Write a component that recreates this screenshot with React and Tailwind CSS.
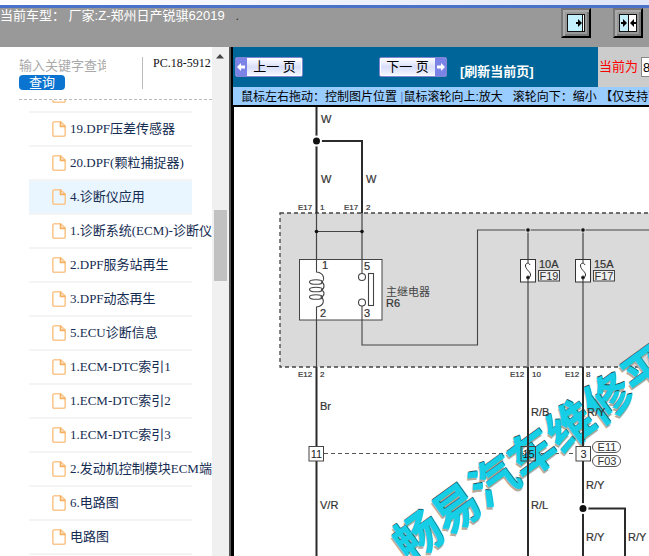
import React from 'react';
import clsx from 'clsx';

const menuItems = [
  { id: 'prev', label: '' },
  { id: 'dpf-19', label: '19.DPF压差传感器' },
  { id: 'dpf-20', label: '20.DPF(颗粒捕捉器)' },
  { id: 'tester', label: '4.诊断仪应用', active: true },
  { id: 'ecm', label: '1.诊断系统(ECM)-诊断仪' },
  { id: 'regen', label: '2.DPF服务站再生' },
  { id: 'dynamic', label: '3.DPF动态再生' },
  { id: 'ecu', label: '5.ECU诊断信息' },
  { id: 'dtc-1', label: '1.ECM-DTC索引1' },
  { id: 'dtc-2', label: '1.ECM-DTC索引2' },
  { id: 'dtc-3', label: '1.ECM-DTC索引3' },
  { id: 'pins', label: '2.发动机控制模块ECM端' },
  { id: 'circuit-6', label: '6.电路图' },
  { id: 'circuit', label: '电路图' },
];

function FileIcon() {
  return (
    <svg width="14" height="16" viewBox="0 0 14 16" fill="none" stroke="#fbc88f" strokeWidth="1.6" className="shrink-0">
      <path d="M8.5 .8H2.6Q.8 .8 .8 2.6V13.4Q.8 15.2 2.6 15.2H11.4Q13.2 15.2 13.2 13.4V5.2Z" />
      <path d="M8.5 .8V5.4H13.2" stroke="#f9ae5c" />
    </svg>
  );
}

function PanelButton({ label, children }) {
  return (
    <button
      type="button"
      aria-label={label}
      className="flex h-[30px] w-[30px] items-center justify-center border-2 border-t-[#777] border-l-[#777] border-r-black border-b-black bg-[#999] shadow-[inset_2px_2px_0_#aaa,inset_-2px_-2px_0_#777]"
    >
      <svg width="18" height="18" viewBox="0 0 18 18">{children}</svg>
    </button>
  );
}

function Header() {
  return (
    <header className="flex h-[39px] shrink-0 justify-between bg-[#999] pr-[6px]">
      <h1 className="text-[13px] leading-4 whitespace-pre text-white">
        当前车型： 厂家:Z-郑州日产锐骐62019{'   '}
        <span className="text-[#333]">.</span>
      </h1>
      <div className="flex gap-[22px]">
        <PanelButton label="展开">
          <rect width="18" height="18" fill="#111" />
          <rect x="1" y="1" width="14" height="16" fill="#c4effc" />
          <rect x="16" y="1" width="1" height="16" fill="#fff" />
          <path d="M9 8h2V5l4 4-4 4v-3H9z" fill="#000" />
        </PanelButton>
        <PanelButton label="收起">
          <rect width="18" height="18" fill="#111" />
          <rect x="1" y="1" width="8" height="16" fill="#c4effc" />
          <rect x="10" y="1" width="7" height="16" fill="#fff" />
          <path d="M2 8h2V5l4 4-4 4v-3H2zM17 8h-2V5l-4 4 4 4v-3h2z" fill="#000" />
        </PanelButton>
      </div>
    </header>
  );
}

function Sidebar() {
  return (
    <aside className="flex w-[229px] shrink-0 bg-white font-['Liberation_Serif','Noto_Sans_CJK_SC',serif]">
      <div className="flex min-w-0 flex-1 flex-col overflow-hidden">
        <form className="ml-[19px] flex h-[53px] shrink-0 border-b border-dashed border-[#bbb] pt-[10px]">
          <div className="flex h-8 w-[124px] shrink-0 flex-col items-start border-r border-[#bbb]">
            <input
              type="text"
              aria-label="关键字"
              placeholder="输入关键字查询"
              className="h-[18px] w-[87px] font-['Liberation_Sans','Noto_Sans_CJK_SC',sans-serif] text-[13px] outline-none placeholder:text-[#a9a9a9]"
            />
            <button type="button" className="h-[15px] w-[46px] rounded bg-[#0a74d0] text-[13px] leading-[15px] text-white">
              查询
            </button>
          </div>
          <span className="pl-[10px] text-[12px] leading-3 whitespace-nowrap text-[#111]">PC.18-5912</span>
        </form>
        <nav className="min-h-0 flex-1 overflow-hidden">
          <ul className="-mt-[21px] ml-[29px] w-[163px]">
            {menuItems.map((item) => (
              <li key={item.id} className={clsx('h-[34px] border-b-2 border-[#f4f4f4]', item.active && 'bg-[#eaf6ff]')}>
                <a href="#" className="flex h-8 items-center gap-1 pl-[23px] text-[13px] whitespace-nowrap text-[#152c52]" aria-label={item.label || '上一项'}>
                  <FileIcon />
                  {item.label}
                </a>
              </li>
            ))}
          </ul>
        </nav>
      </div>
      <div className="flex w-[17px] shrink-0 flex-col items-center bg-[#f0f0f0] pr-px pt-[7px]">
        <svg width="8" height="5" viewBox="0 0 8 5" fill="#444">
          <path d="M4 0l4 4.5H0z" />
        </svg>
        <div className="mt-[151px] h-[71px] w-[13px] bg-[#c1c1c1]" />
      </div>
    </aside>
  );
}

function PageButton({ children, arrow }) {
  return (
    <button
      type="button"
      className={clsx(
        'flex h-5 w-[68px] items-center overflow-hidden rounded-[2px] border border-[#7f86cf] bg-linear-to-b from-white via-[#d9def9] to-[#f6f7ff] text-[13px] text-black shadow-[inset_0_0_0_1px_#fff]',
        arrow === 'left' ? 'flex-row' : 'flex-row-reverse'
      )}
    >
      <svg width="11" height="18" viewBox="0 0 11 18" className={clsx('shrink-0', arrow === 'right' && 'rotate-180')}>
        <rect width="11" height="18" fill="#7b83e6" />
        <path d="M1 9l4-4v2.500h4v3H5V13z" fill="#fff" />
      </svg>
      <span className="flex-1 text-center leading-4 whitespace-nowrap">{children}</span>
    </button>
  );
}

function Toolbar() {
  return (
    <div className="flex h-10 shrink-0 overflow-hidden">
      <div className="flex w-[365px] shrink-0 items-start bg-[#069] pl-[2px] pt-[10px]">
        <PageButton arrow="left">上一 页</PageButton>
        <div className="w-[76px]" />
        <PageButton arrow="right">下一 页</PageButton>
        <a href="#" className="mt-[6px] ml-[13px] text-[13px] leading-[18px] font-bold whitespace-nowrap text-white">
          [刷新当前页]
        </a>
      </div>
      <div className="flex flex-1 items-center bg-[#ccc] pl-px">
        <label htmlFor="page" className="shrink-0 text-[13px] text-[#f00]">当前为</label>
        <input
          id="page"
          type="text"
          defaultValue="8"
          className="ml-[3px] h-5 w-10 shrink-0 border border-[#888] bg-white pl-px text-[13px] text-black"
        />
      </div>
    </div>
  );
}

const wireLabels = [
  { x: 321, y: 123, text: 'W' },
  { x: 321, y: 183, text: 'W' },
  { x: 366, y: 183, text: 'W' },
  { x: 320, y: 410, text: 'Br' },
  { x: 320, y: 509, text: 'V/R' },
  { x: 531, y: 416, text: 'R/B' },
  { x: 587, y: 416, text: 'R/Y' },
  { x: 531, y: 509, text: 'R/L' },
  { x: 586, y: 489, text: 'R/Y' },
  { x: 586, y: 541, text: 'R/Y' },
  { x: 628, y: 541, text: 'R/Y' },
  { x: 322, y: 269, text: '1' },
  { x: 364, y: 270, text: '5' },
  { x: 320, y: 317, text: '2' },
  { x: 364, y: 317, text: '3' },
  { x: 539, y: 268, text: '10A' },
  { x: 594, y: 268, text: '15A' },
  { x: 386, y: 307, text: 'R6' },
];

const pinLabels = [
  { x: 298, y: 210, text: 'E17' },
  { x: 320, y: 210, text: '1' },
  { x: 344, y: 210, text: 'E17' },
  { x: 366, y: 210, text: '2' },
  { x: 298, y: 377, text: 'E12' },
  { x: 320, y: 377, text: '2' },
  { x: 510, y: 377, text: 'E12' },
  { x: 532, y: 377, text: '10' },
  { x: 565, y: 377, text: 'E12' },
  { x: 586, y: 377, text: '8' },
];

const fuses = [
  { x: 528, name: 'F19' },
  { x: 583, name: 'F17' },
];

const connectors = [
  { x: 316, text: '11', fill: '#fff' },
  { x: 528, text: '15', fill: 'none' },
  { x: 583, text: '3', fill: '#fff' },
];

function Watermark() {
  const text = '畅易汽车维修平';
  return (
    <g transform="translate(419 537) rotate(-36)" fontSize="47" fontWeight="700">
      <text x="-26" y="18" fill="#b5aa9b">{text}</text>
      <text x="-23" y="15" fill="#17525c">{text}</text>
      <text x="-24" y="16" fill="#16cfe6" stroke="#16cfe6" strokeWidth="0.600">{text}</text>
    </g>
  );
}

function WiringDiagram() {
  return (
    <svg width="415" height="449" viewBox="234 107 415 449" className="block font-['Liberation_Sans','Noto_Sans_CJK_SC',sans-serif]">
      <rect x="280" y="213" width="400" height="154" fill="#dadada" stroke="#444" strokeWidth="1.3" strokeDasharray="4 3" />
      <path d="M324 453.5H576" stroke="#555" strokeDasharray="4 3" />
      <Watermark />

      {/* outer wires */}
      <g fill="none" stroke="#2b2b2b" strokeWidth="2">
        <path d="M316.5 107V213M316.5 367V556M316 141H362V213" />
        <path d="M528 367V556M583 367V556M583 508.500H625V556" />
      </g>

      {/* wires inside the fuse box */}
      <g fill="none" stroke="#444" strokeWidth="1.2">
        <path d="M316.5 213V260M362 213V274M316.5 231.500H362M316.500 320V367" />
        <path d="M528 230V367M583 230V367" />
      </g>
      <g fill="#111">
        <circle cx="316.5" cy="231.5" r="1.8" />
        <circle cx="362" cy="231.5" r="1.8" />
      </g>

      {/* relay */}
      <rect x="299.5" y="259.5" width="82.500" height="60.500" fill="#fff" stroke="#444" />
      <g fill="none" stroke="#444" strokeWidth="1.100">
        <path d="M316.5 259V272C325 273 325 281 321 282C325 283 325 289 321 290C325 291 325 296 321 297C325 300 324 306 316.5 307V320" />
        <ellipse cx="316" cy="282" rx="6.500" ry="2.300" />
        <ellipse cx="316" cy="289.500" rx="6.500" ry="2.300" />
        <ellipse cx="316" cy="297" rx="6.500" ry="2.300" />
        <path d="M362 259V274M362 306V345H477.500V230H649" />
        <circle cx="362" cy="277" r="3.500" fill="#fff" />
        <circle cx="362" cy="302.500" r="3.500" fill="#fff" />
        <rect x="368.500" y="273.500" width="5" height="32" />
      </g>

      {fuses.map((fuse) => (
        <g key={fuse.name}>
          <circle cx={fuse.x} cy="230" r="2.300" fill="#111" stroke="#ddd" />
          <rect x={fuse.x - 7.5} y="259.5" width="15" height="22.500" fill="#fff" stroke="#333" />
          <g transform={`translate(${fuse.x} 271)`} fill="none" stroke="#333">
            <path d="M0 -11V-8M2 -6C1 -9 -3 -8 -2.500 -5C-2 -1 3 1 2.500 4C2.300 6 1 7 0 7V11" />
            <circle cx="0" cy="6.500" r="1.500" fill="#111" />
          </g>
          <rect x={fuse.x + 10.5} y="270.5" width="21" height="10.500" fill="#eee" stroke="#444" />
          <text x={fuse.x + 21} y="280" fontSize="11" textAnchor="middle" fill="#333">{fuse.name}</text>
        </g>
      ))}

      {connectors.map((item) => (
        <g key={item.text}>
          <rect x={item.x - 7} y="446.500" width="14.500" height="14.500" fill={item.fill} stroke="#444" />
          <text x={item.x + 0.5} y="457.500" fontSize="11" textAnchor="middle" fill="#222">{item.text}</text>
        </g>
      ))}

      <g fill="#fff" stroke="#555">
        <rect x="592.500" y="441.500" width="28" height="11" rx="5.500" />
        <rect x="592.500" y="455.500" width="28" height="11" rx="5.500" />
      </g>
      <g fontSize="11" textAnchor="middle" fill="#333">
        <text x="607" y="451">E11</text>
        <text x="607" y="465">F03</text>
      </g>

      <g fill="#111" stroke="#fff" strokeWidth="2">
        <circle cx="316.500" cy="141" r="4.500" />
        <circle cx="583" cy="508.500" r="4.500" />
      </g>

      <g fontSize="11" fill="#333" stroke="#333" strokeWidth="0.200">
        {wireLabels.map((label) => (
          <text key={`${label.x}-${label.y}`} x={label.x} y={label.y}>{label.text}</text>
        ))}
      </g>
      <text x="386" y="296" fontSize="11" fill="#444">主继电器</text>
      <g fontSize="8" fill="#333" stroke="#333" strokeWidth="0.200">
        {pinLabels.map((label) => (
          <text key={`${label.x}-${label.y}`} x={label.x} y={label.y}>{label.text}</text>
        ))}
      </g>
    </svg>
  );
}

export default function App() {
  return (
    <div className="flex h-screen flex-col overflow-hidden bg-white font-['Liberation_Sans','Noto_Sans_CJK_SC',sans-serif]">
      <div className="h-2 shrink-0 border-b-3 border-[#4a72c8] bg-linear-to-r from-white to-[#dfe6f7]" />
      <Header />
      <div className="flex min-h-0 flex-1">
        <Sidebar />
        <div className="w-1 shrink-0 border-r-2 border-black bg-[#555]" />
        <main className="flex min-w-0 flex-1 flex-col">
          <Toolbar />
          <p className="h-[18px] shrink-0 overflow-hidden bg-[#9cf] pl-2 text-[12px] leading-5 whitespace-pre text-black">
            鼠标左右拖动：控制图片位置 <span className="text-[#5b7fc4]">|</span>鼠标滚轮向上:放大{'   '}滚轮向下：缩小 【仅支持下
          </p>
          <div className="min-h-0 flex-1 overflow-hidden border-t-2 border-l border-black bg-white">
            <WiringDiagram />
          </div>
        </main>
      </div>
    </div>
  );
}
